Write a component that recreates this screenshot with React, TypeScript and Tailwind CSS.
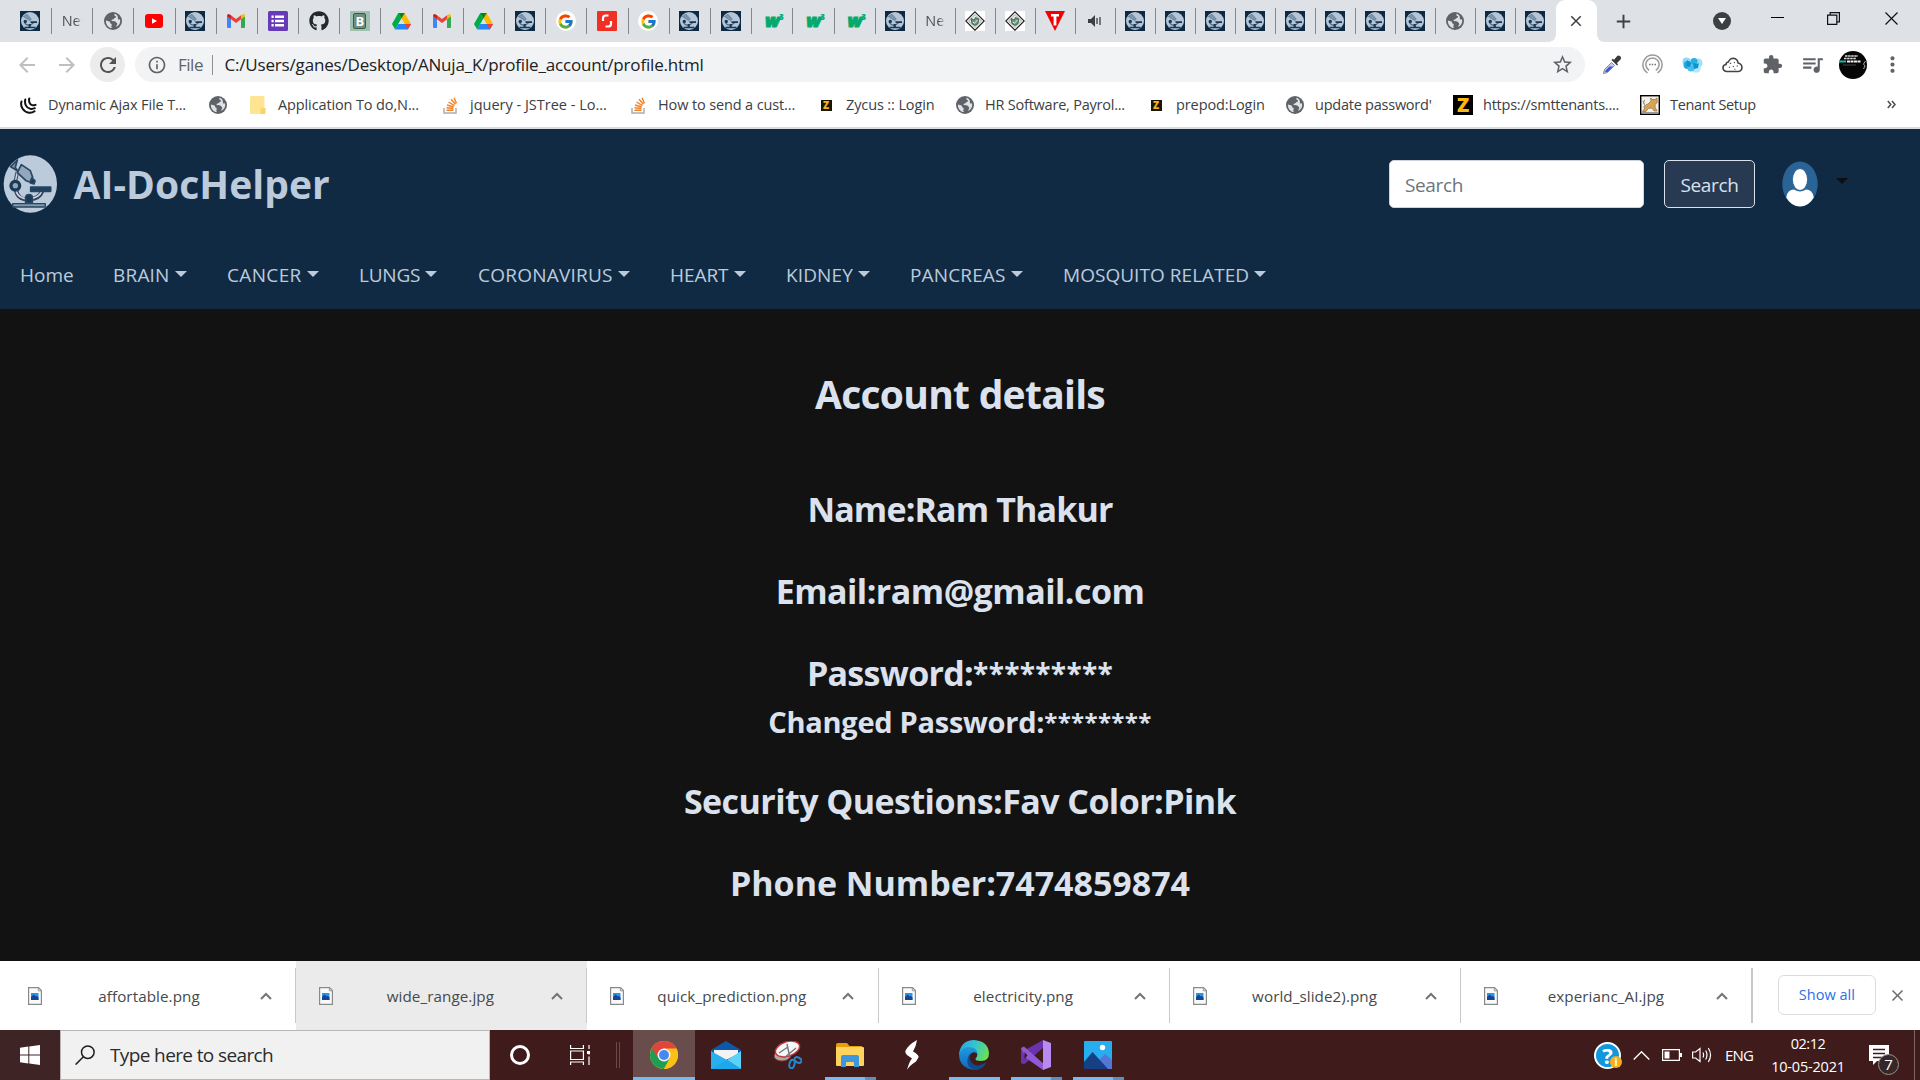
import type { ReactNode } from "react";
import { MdArrowBack, MdArrowForward, MdRefresh, MdInfoOutline, MdStarBorder, MdExtension, MdQueueMusic, MdMoreVert, MdClose, MdAdd } from "react-icons/md";
import { FcGoogle } from "react-icons/fc";
import { FaGithub } from "react-icons/fa";

/* ---------- favicons ---------- */

function Microscope() {
  return (
    <>
      <ellipse cx="91" cy="102" rx="80" ry="86" fill="#bccbdc" />
      <g stroke="#29455f" strokeWidth="5" strokeLinejoin="round" fill="none">
        <path d="M32 50 L52 30 L46 52 L52 62 Z" fill="#7f97ad" />
        <path d="M52 66 L46 94" stroke="#3b5873" strokeWidth="11" />
        <path d="M52 66 L46 94" stroke="#d9cfdf" strokeWidth="4" />
        <path d="M64 44 L91 62 L98 82 L90 96 L78 92 L52 68 Z" fill="#92a7bc" />
        <path d="M95 84 L105 92 L102 102 L91 99 Z" fill="#1d3a55" />
        <path d="M48 120 C52 144 72 150 88 148 C110 146 122 136 126 124" strokeWidth="13" />
        <path d="M48 120 C52 142 72 148 88 146 C110 144 120 136 125 124" stroke="#d9cfdf" strokeWidth="5" />
        <circle cx="46" cy="107" r="13" fill="#8fa6bb" stroke="#1d3a55" strokeWidth="10" />
        <path d="M92 111 H152 V124 H92 Z" fill="#1d4260" />
        <path d="M77 158 V143 Q77 134 87 134 Q97 134 97 143 V158 Z" fill="#17395a" />
        <path d="M38 161 H136 V171 H38 Z" fill="#8098ae" strokeWidth="4" />
      </g>
    </>
  );
}

function LogoFav() {
  return (
    <svg className="size-5 shrink-0" viewBox="0 0 20 20">
      <rect width="20" height="20" fill="#0e2942" />
      <circle cx="10" cy="10" r="9" fill="#b4c6d8" />
      <path d="M3.500 5.500 7 3.200 11.300 8.200 9.500 9.600z" fill="#7d97b0" stroke="#4c6a86" strokeWidth=".6" />
      <path d="M4.600 9.500c-.5 4.500 4.500 6.500 8.900 2.200" fill="none" stroke="#4c6a86" strokeWidth="1.200" />
      <circle cx="5.300" cy="10.500" r="1.700" fill="#1d3a55" />
      <path d="M10.500 10.300h6.500v1.600h-6.500zM8.600 13h2.200v3h-2.200zM4.500 15.700h11v1.500h-11z" fill="#183853" />
    </svg>
  );
}

function Globe() {
  return (
    <svg className="size-[18px] shrink-0" viewBox="0 0 18 18">
      <circle cx="9" cy="9" r="9" fill="#5f6368" />
      <path d="M10.800 1.800c-1 1-.3 1.900.6 2.300 1 .5.800 1.500-.4 1.800-1.300.3-1 1.400-2.300 1.500-1.200.1-1.700.9-.7 1.500 1.300.4 3.300-.3 3.900 1.200.3 1 1.300.7 1.300 1.800 0 1-.9 1.700-1.200 2.900 2.600-.9 4.200-3.200 4.200-5.800 0-.7-.1-1.200-.3-1.800-1.500.8-2.200-.1-2-1.200.1-1.400-.8-3.700-3.100-4.200z" fill="#dee1e6" />
      <path d="M1.900 8.500c1.300.7 2.500.300 3.600 1.100 1.100.800.200 1.800 1.400 2.100 1.100.3 1 1.400.5 2.300-.3.700.1 1.300.6 2.100-3.500-.2-6.300-3.500-6.100-7.600z" fill="#dee1e6" />
    </svg>
  );
}

function YouTube() {
  return (
    <svg className="h-[14px] w-[18px] shrink-0" viewBox="0 0 18 14">
      <rect width="18" height="14" rx="3" fill="#f00" />
      <path d="M7 4.200v5.600L12 7z" fill="#fff" />
    </svg>
  );
}

function Gmail() {
  return (
    <svg className="h-[14px] w-[18px] shrink-0" viewBox="0 0 18 14">
      <path d="M0 2v11q0 1 1 1h3V5z" fill="#4285f4" />
      <path d="M18 2v11q0 1-1 1h-3V5z" fill="#34a853" />
      <path d="M4 5.200V1.200l5 3.700 5-3.700v4L9 9z" fill="#ea4335" />
      <path d="M14 1.200 15.200.4Q18-.8 18 2.200L14 5.300z" fill="#fbbc04" />
      <path d="M4 1.200 2.800.4Q0-.8 0 2.200L4 5.300z" fill="#c5221f" />
    </svg>
  );
}

function Forms() {
  return (
    <svg className="size-5 shrink-0" viewBox="0 0 20 20">
      <rect width="20" height="20" rx="1.500" fill="#673ab7" />
      <path d="M7 4.500h9v2.400H7zM7 8.800h9v2.400H7zM7 13.100h9v2.400H7zM3.500 4.500h2.200v2.400H3.500zM3.500 8.800h2.200v2.400H3.500zM3.500 13.100h2.200v2.400H3.500z" fill="#fff" />
    </svg>
  );
}

function Drive() {
  return (
    <svg className="h-[17px] w-[19px] shrink-0" viewBox="0 0 19 17">
      <path d="M6.300 0h6.400L6.400 11 3.200 16.500 0 11z" fill="#00ac47" />
      <path d="M6.300 0h6.400L19 11h-6.300z" fill="#ffba00" />
      <path d="M3.200 16.500 6.400 11H19l-3.200 5.500z" fill="#2684fc" />
      <path d="M12.700 11H19l-3.200 5.500z" fill="#ea4335" />
      <path d="M6.300 0h6.400L9.500 5.500z" fill="#00832d" />
      <path d="M9.500 5.600 12.600 11H6.400z" fill="#dee1e6" />
    </svg>
  );
}

function GreenB() {
  return (
    <div className="flex size-5 shrink-0 items-center justify-center bg-[#9fc0ae]">
      <div className="flex h-[16px] w-[13px] items-center justify-center rounded-[2px] border border-[#3c5a4b] bg-[#6f8f7f] text-[13px] leading-none font-bold text-white">B</div>
    </div>
  );
}

function Google() {
  return (
    <div className="flex size-5 shrink-0 items-center justify-center rounded-full bg-white">
      <FcGoogle className="size-[17px]" />
    </div>
  );
}

function Shutter() {
  return (
    <svg className="size-5 shrink-0" viewBox="0 0 20 20">
      <rect width="20" height="20" rx="1" fill="#ee3124" />
      <path d="M11.500 4.500H8.800Q6 4.500 6 7.300V10M8.500 15.500h2.700Q14 15.500 14 12.700V10" fill="none" stroke="#fff" strokeWidth="2.200" />
    </svg>
  );
}

function W3() {
  return (
    <div className="ml-[5px] flex h-5 shrink-0 font-extrabold text-[#04aa6d]">
      <span className="text-[18px] leading-[18px] tracking-[-1px] italic [-webkit-text-stroke:1px_#04aa6d]">w</span>
      <span className="text-[8px] leading-[12px]">3</span>
    </div>
  );
}

function Diamond() {
  return (
    <svg className="size-5 shrink-0" viewBox="0 0 20 20">
      <rect width="20" height="20" fill="#fff" />
      <path d="M10 .8 19.200 10 10 19.200.8 10z" fill="#fff" stroke="#222" strokeWidth="1.200" />
      <path d="M10 3.500 16.500 10 10 16.500 3.500 10z" fill="#e3e9e4" stroke="#777" strokeWidth=".6" />
      <path d="M6 7.500 9 9l1.500-2.500L13.800 8l-.8 4.500-3 2-3-2z" fill="#6c9a7e" stroke="#263d2f" strokeWidth=".7" />
      <path d="m8 11 1.500 1.300L12.500 9" stroke="#e3e9e4" strokeWidth="1" fill="none" />
    </svg>
  );
}

function RedT() {
  return (
    <svg className="size-5 shrink-0" viewBox="0 0 20 20">
      <path d="M0 0h20L10 20z" fill="#f40000" />
      <path d="M6 3h8v2.400h-2.600v9H8.600v-9H6z" fill="#fff" />
    </svg>
  );
}

function Speaker() {
  return (
    <svg className="h-3 w-3.5 shrink-0" viewBox="0 0 14 12">
      <path d="M0 4h3l4-4v12L3 8H0z" fill="#3c4043" />
      <path d="M9 3v6M12 2v8" stroke="#3c4043" strokeWidth="1.300" />
    </svg>
  );
}

const NewTab = () => (
  <span className="block w-[21px] overflow-hidden bg-gradient-to-r from-[#4a4d51] from-70% to-[#dee1e6] bg-clip-text text-[14.500px] whitespace-nowrap text-transparent">New</span>
);

const favs: Record<string, () => ReactNode> = {
  L: LogoFav, N: NewTab, O: Globe, Y: YouTube, M: Gmail, F: Forms,
  H: () => <FaGithub className="size-5 shrink-0 text-[#24292e]" />,
  B: GreenB, D: Drive, G: Google, S: Shutter, W: W3, X: Diamond, T: RedT, P: Speaker,
};

const wideTabs = "LNOYLMFHBDMDLGSGLLWWW".split("");
const narrowTabs = "LNXXTPLLLLLLLLOLL".split("");

function Tabs({ ids, cell }: { ids: string[]; cell: string }) {
  return (
    <>
      {ids.map((id, i) => {
        const Icon = favs[id];
        return (
          <div key={i} className={cell}>
            <div className="flex w-5 items-center justify-center"><Icon /></div>
          </div>
        );
      })}
    </>
  );
}

function TabStrip() {
  return (
    <div className="flex h-[42px] bg-[#dee1e6] pl-[10.800px]">
      <div className="flex h-[25px] pt-[9px] box-content">
        <Tabs ids={wideTabs} cell="flex w-[41.200px] shrink-0 items-center justify-end border-r-[1.500px] border-[#85888d] pr-[10.500px] -mt-px" />
        <Tabs ids={narrowTabs} cell="flex w-[40px] shrink-0 items-center justify-end border-r-[1.500px] border-[#85888d] pr-[9.500px] -mt-px last:border-transparent" />
      </div>
      <div className="flex h-[42px] items-end">
        <div className="size-[7px] bg-[radial-gradient(circle_at_0_0,#dee1e6_6.500px,#fff_7px)] -ml-[7px]" />
        <div className="flex h-[42px] w-[41px] items-center justify-center rounded-t-[9px] bg-white">
          <MdClose className="size-[18px] text-[#3c4043]" />
        </div>
        <div className="size-[7px] bg-[radial-gradient(circle_at_100%_0,#dee1e6_6.500px,#fff_7px)]" />
      </div>
      <div className="flex w-[40px] items-center justify-center"><MdAdd className="size-[23px] text-[#3c4043]" /></div>
      <div className="ml-auto flex w-[207px] items-center">
        <div className="flex size-[18px] items-center justify-center rounded-full bg-[#3c4043]">
          <svg className="size-[8px]" viewBox="0 0 8 8"><path d="M0 1h8L4 7z" fill="#fff" /></svg>
        </div>
        <div className="ml-[40px] h-px w-[13px] bg-black -mt-[7px]" />
        <svg className="ml-[43px] h-[13px] w-[13px] -mt-[5px]" viewBox="0 0 13 13" fill="none" stroke="#111" strokeWidth="1.200">
          <path d="M.6 3.200h9.200v9.200H.6zM3.200 3V.6h9.200v9.200H10" />
        </svg>
        <svg className="ml-[45px] h-[13px] w-[13px] -mt-[5px]" viewBox="0 0 13 13" stroke="#111" strokeWidth="1.200">
          <path d="M.5.5l12 12M12.500.5l-12 12" />
        </svg>
      </div>
    </div>
  );
}

/* ---------- toolbar ---------- */

function Toolbar() {
  return (
    <div className="flex h-[45px] items-center bg-white pl-[15px]">
      <MdArrowBack className="size-[24px] text-[#bdbfc2]" />
      <MdArrowForward className="ml-[16px] size-[24px] text-[#bdbfc2]" />
      <div className="ml-[11px] flex size-[35px] items-center justify-center rounded-full bg-[#ececed]">
        <MdRefresh className="size-[24px] text-[#505357]" />
      </div>
      <div className="ml-[10px] flex h-[35px] w-[1450px] items-center rounded-full bg-[#f1f3f4] pl-[12px] pr-[11px] text-[17px] whitespace-nowrap">
        <MdInfoOutline className="size-[20px] text-[#5f6368]" />
        <span className="ml-[11px] tracking-[-0.480px] text-[#5f6368]">File</span>
        <div className="ml-[9px] h-[20px] w-[1.500px] bg-[#8d9195]" />
        <span className="ml-[11px] tracking-[-0.180px] text-[#202124]">C:/Users/ganes/Desktop/ANuja_K/profile_account/profile.html</span>
        <MdStarBorder className="ml-auto size-[23px] text-[#5f6368]" />
      </div>
      <div className="ml-[7px] flex items-center">
        <div className="flex w-10 justify-center">
          <svg className="size-5" viewBox="0 0 20 20">
            <path d="m1.500 18.500 1-4 7-7 3 3-7 7z" fill="#c7cbe8" stroke="#888" strokeWidth="1" />
            <path d="m3 17 1-2 3.500-3.500h3.500L5.500 17z" fill="#3b55d8" />
            <path d="m9.500 5 5.500 5.500 1-1-1-1.500 3.500-3.500q1.200-1.800-.3-3.200-1.600-1.400-3.200-.1L12 4.800l-1.300-1z" fill="#3a3a3a" />
          </svg>
        </div>
        <div className="flex w-10 justify-center">
          <svg className="size-[21px]" viewBox="0 0 21 21" fill="none" stroke="#999" strokeWidth="1.500">
            <path d="M5.500 18.900a9.600 9.600 0 1 1 10 0M7.200 16.300a6.600 6.600 0 1 1 6.600 0" />
            <path d="M7 10.500h1.500M9.700 10.500h1.500M12.500 10.500H14" stroke="#777" />
          </svg>
        </div>
        <div className="flex w-10 justify-center">
          <svg className="h-4 w-[21px]" viewBox="0 0 21 16">
            <circle cx="16" cy="6" r="4.600" fill="#9fdff7" /><circle cx="14" cy="11" r="4.800" fill="#b5e8fa" /><circle cx="4.500" cy="4.500" r="4" fill="#8fd8f5" />
            <circle cx="5.500" cy="8" r="4" fill="#27a9e0" /><circle cx="12" cy="4.500" r="3.600" fill="#27b0e6" /><circle cx="9" cy="11" r="3.500" fill="#49bdec" />
            <path d="M11 6l4 1 2-1-1 5-4 1zM5 3l4 3-1 4-4-1z" fill="#0f93cf" />
          </svg>
        </div>
        <div className="flex w-10 justify-center">
          <svg className="h-4 w-[21px]" viewBox="0 0 21 16" fill="none" stroke="#444" strokeWidth="1.600">
            <path d="M4.500 14.500Q1 14 1 10.800 1 8 4 7.500q0-2 2.300-2.500Q8 1.200 11.500 1.200q4 .5 4.600 4.800 3.800 1 3.900 4.500-.3 3.600-3.600 4z" />
            <path d="m8 6 1 .8M12 5l.8 1M7 10l1 .5M11 9l.6 1M15 8.500l.5 1M12.500 12l.8.500" strokeWidth="1.200" />
          </svg>
        </div>
        <div className="flex w-10 justify-center"><MdExtension className="size-[21px] text-[#5f6368]" /></div>
        <div className="flex w-10 justify-center"><MdQueueMusic className="size-[25px] text-[#5f6368]" /></div>
        <div className="flex w-[42px] justify-center">
          <svg className="size-[28px]" viewBox="0 0 28 28">
            <circle cx="14" cy="14" r="14" fill="#060606" />
            <path d="M6 5h13M5 7.500h12" stroke="#ddd" strokeWidth="1.500" strokeDasharray="2.500 .6" />
            <path d="M0 10.500h7" stroke="#14b8b0" strokeWidth="2" />
            <path d="M8 10.500h14" stroke="#eee" strokeWidth="2" strokeDasharray="3 .5" />
            <path d="M4 14h13" stroke="#555" strokeWidth=".8" />
            <path d="m26.500 10-2 3 1.500 2-1.500 3" stroke="#aaa" fill="none" />
          </svg>
        </div>
        <MdMoreVert className="ml-[6px] size-[25px] text-[#5f6368]" />
      </div>
    </div>
  );
}

/* ---------- bookmarks ---------- */

const Jq = () => (
  <svg className="size-[17px]" viewBox="0 0 17 17" fill="none" stroke="#111" strokeWidth="2" strokeLinecap="round">
    <path d="M1.500 4.500C0 9.500 3.500 15.300 9 15.700q3.500.2 5.500-1.500M5.300 2.500c-1 4 .8 8.500 5 9.300q2.500.4 4.500-.6M9.300 1.500C8.500 4.200 9.700 7.500 12 8.100q1.800.5 3.500-.3" />
  </svg>
);
const Folder = () => (
  <svg className="h-[18px] w-4" viewBox="0 0 16 18">
    <path d="M0 1.500Q0 0 1.500 0H13q1.500 0 1.500 1.500V12h1v6H1.500Q0 18 0 16.500z" fill="#ffe491" />
    <path d="M10.500 18v-4q0-2 2.500-2h2.300v4.500q0 1.500-1.500 1.500z" fill="#f9d568" />
  </svg>
);
const Stack = () => (
  <svg className="h-[17px] w-[15px]" viewBox="0 0 15 17" fill="none">
    <path d="M1 11V16h12v-5" stroke="#a9adb3" strokeWidth="1.500" />
    <path d="M3.500 13.300h7M3.500 10.800l7 .7M4 8l6.700 2M5.500 5l6 3.600M8 2.300l4.500 5M11 .8l2.500 5.500" stroke="#f48024" strokeWidth="1.400" />
  </svg>
);
const ZSmall = () => (
  <div className="flex size-[11px] items-center justify-center bg-[#1a1607] text-[10px] leading-none font-extrabold text-[#f2b417]">Z</div>
);
const ZBig = () => (
  <div className="flex size-5 items-center justify-center bg-black text-[20px] leading-none font-extrabold text-[#fdb913]">Z</div>
);
const Cat = () => (
  <svg className="size-5" viewBox="0 0 20 20">
    <rect x=".7" y=".7" width="18.600" height="18.600" fill="#f3f1ec" stroke="#000" strokeWidth="1.400" />
    <path d="M4 9q-2-3 1-4M8 9l3-3-.5-3 2 1.500h2.500L17 3l.3 4.500-2.300 2 .2 3 2 3.500h-3l-2.500-3-3.500.5L6 16.500H2.500l2-3Q4 10 8 9z" fill="#d9a350" stroke="#8b744f" strokeWidth=".7" />
    <path d="M2 17.500h16M3 12h2M3 6l2 5" stroke="#999" />
  </svg>
);

const bookmarks: { icon: () => ReactNode; text: string; cls: string }[] = [
  { icon: Jq, text: "Dynamic Ajax File T...", cls: "w-[190px] tracking-[-0.130px]" },
  { icon: Globe, text: "", cls: "w-[40px]" },
  { icon: Folder, text: "Application To do,N...", cls: "w-[192px] tracking-[-0.120px]" },
  { icon: Stack, text: "jquery - JSTree - Lo...", cls: "w-[188px]" },
  { icon: Stack, text: "How to send a cust...", cls: "w-[188px] tracking-[-0.130px]" },
  { icon: ZSmall, text: "Zycus :: Login", cls: "w-[139px] tracking-[-0.120px]" },
  { icon: Globe, text: "HR Software, Payrol...", cls: "w-[191px] tracking-[-0.220px]" },
  { icon: ZSmall, text: "prepod:Login", cls: "w-[139px] tracking-[-0.100px]" },
  { icon: Globe, text: "update password'", cls: "w-[168px] tracking-[-0.240px]" },
  { icon: ZBig, text: "https://smttenants....", cls: "w-[187px] tracking-[-0.240px]" },
  { icon: Cat, text: "Tenant Setup", cls: "w-[160px] tracking-[-0.350px]" },
];

function Bookmarks() {
  return (
    <div className="flex h-[42px] items-center border-b-2 border-[#dadce0] bg-white pb-[4px] pl-[18px] text-[14.500px] whitespace-nowrap text-[#3c4043]">
      {bookmarks.map(({ icon: Icon, text, cls }, i) => (
        <div key={i} className={"flex shrink-0 items-center " + cls}>
          <div className="mr-[10px] flex w-5 shrink-0 justify-center"><Icon /></div>
          {text}
        </div>
      ))}
      <svg className="ml-auto mr-[24px] h-[9px] w-[9px] -mt-px" viewBox="0 0 9 9" fill="none" stroke="#4a4d51" strokeWidth="1.500"><path d="M.8 1l3 3.500-3 3.500M5 1l3 3.500L5 8" /></svg>
    </div>
  );
}

/* ---------- page ---------- */

const links: [string, string, boolean][] = [
  ["Home", "w-[93px] tracking-[0px]", false],
  ["BRAIN", "w-[114px] tracking-[0.200px]", true],
  ["CANCER", "w-[132px] tracking-[0.350px]", true],
  ["LUNGS", "w-[119px] tracking-[-0.200px]", true],
  ["CORONAVIRUS", "w-[192px] tracking-[0.220px]", true],
  ["HEART", "w-[116px] tracking-[-0.050px]", true],
  ["KIDNEY", "w-[124px] tracking-[0.130px]", true],
  ["PANCREAS", "w-[153px] tracking-[0.140px]", true],
  ["MOSQUITO RELATED", "w-[210px] tracking-[0.040px]", true],
];

const Caret = ({ className }: { className: string }) => (
  <svg className={className} viewBox="0 0 12 6"><path d="M0 0h12L6 6z" fill="currentColor" /></svg>
);

function SiteHeader() {
  return (
    <header className="h-[180px] bg-[#112a43] text-[#bccbdc]">
      <div className="flex h-[110px] items-center">
        <svg className="mt-[2px] size-[70px] shrink-0" viewBox="0 0 210 210"><Microscope /></svg>
        <span className="-mt-px ml-[3.500px] text-[39px] leading-none font-bold tracking-[0.060px]">AI-DocHelper</span>
        <div className="ml-auto flex w-[531px] items-center text-[19px] tracking-[-0.360px]">
          <div className="flex h-12 w-[255px] items-center rounded-[5px] border border-[#ced4da] bg-white pt-[2px] pl-[15px] text-[#6c757d]">Search</div>
          <div className="ml-[20px] flex h-12 w-[91px] items-center justify-center rounded-[5px] border border-[#d9e1ec] bg-[#273a52] pt-[2px] text-[#d9e1ec]">Search</div>
          <svg className="ml-[27px] h-[46px] w-[36px]" viewBox="0 0 36 46">
            <ellipse cx="18" cy="23" rx="17.700" ry="22.500" fill="#2a6496" />
            <path d="M4.200 36.500Q5.500 28.500 12 28.500q6 3.800 12 0 6.500 0 7.800 8Q26.500 45.500 18 45.500T4.200 36.500z" fill="#fff" />
            <ellipse cx="18" cy="18.500" rx="7.600" ry="11" fill="#fff" stroke="#2a6496" strokeWidth="1" />
          </svg>
          <Caret className="mb-[6px] ml-[18px] h-[6px] w-3 text-[#0b0f14]" />
        </div>
      </div>
      <nav className="flex h-[70px] items-center pl-5 text-[19px] whitespace-nowrap">
        {links.map(([label, cls, caret]) => (
          <div key={label} className={"flex h-[70px] shrink-0 items-center " + cls}>
            <span className="pt-[2px]">{label}</span>
            {caret && <Caret className="ml-[5px] h-[6px] w-3" />}
          </div>
        ))}
      </nav>
    </header>
  );
}

function Account() {
  return (
    <main className="flex h-[652px] flex-col items-center bg-[#121212] pt-[60px] text-[34px] leading-[42px] font-bold whitespace-nowrap text-[#dbe2ee]">
      <h1 className="text-[39px] leading-[50px] tracking-[-0.730px]">Account details</h1>
      <h2 className="mt-[69px] tracking-[-0.850px]">Name:Ram Thakur</h2>
      <h2 className="mt-[40px] tracking-[-0.530px]">Email:ram@gmail.com</h2>
      <h2 className="mt-[40px] h-[42px] tracking-[-0.700px]">Password:<span className="align-[2px] text-[28px] leading-none tracking-[0.300px]">*********</span></h2>
      <h3 className="mt-[10px] h-[35px] text-[29px] leading-[36px] tracking-[-0.280px]">Changed Password:<span className="align-[2px] text-[24px] leading-none tracking-[0.350px]">********</span></h3>
      <h2 className="mt-[41px] tracking-[-0.560px]">Security Questions:Fav Color:Pink</h2>
      <h2 className="mt-[40px] tracking-[-0.020px]">Phone Number:7474859874</h2>
    </main>
  );
}

/* ---------- downloads ---------- */

const files: [string, string][] = [
  ["affortable.png", "bg-white"], ["wide_range.jpg", "bg-[#ebebeb]"], ["quick_prediction.png", "bg-white"],
  ["electricity.png", "bg-white"], ["world_slide2).png", "bg-white"], ["experianc_AI.jpg", "bg-white"],
];

function Downloads() {
  return (
    <div className="flex h-[69px] bg-white pl-[4.500px]">
      {files.map(([name, bg], i) => (
        <div key={name} className={"flex w-[291.400px] shrink-0 items-center " + bg}>
          <svg className="ml-[23px] h-[18px] w-[14px]" viewBox="0 0 14 18">
            <path d="M.6.600h9.900L13.400 3.500v13.900H.6z" fill="#fafafa" stroke="#8a8a8a" strokeWidth="1.200" />
            <path d="M10.300.8v3h3" fill="none" stroke="#9a9a9a" />
            <rect x="3" y="6" width="7.500" height="7" fill="#2596e8" />
            <path d="M3 13v-3l2.700-2.500 2 2 1-.8L10.500 10.500V13z" fill="#17458f" />
          </svg>
          <span className="ml-[-3px] w-[221px] pt-px text-center text-[15.200px] tracking-[0.080px] text-[#45494d]">{name}</span>
          <svg className="h-[8px] w-[12px]" viewBox="0 0 12 8" fill="none" stroke="#70757a" strokeWidth="2"><path d="M1 7l5-5 5 5" /></svg>
          <div className={"ml-auto h-[55px] bg-[#c9c9cb] " + (i === 5 ? "w-[2px]" : "w-px")} />
        </div>
      ))}
      <div className="mt-[14px] ml-[25px] flex h-10 w-[98px] items-center justify-center rounded-[6px] border border-[#dadce0] text-[14.500px] text-[#2a6fe8]">Show all</div>
      <MdClose className="mt-[25px] ml-[12px] size-[19px] text-[#6b6f73]" />
    </div>
  );
}

/* ---------- taskbar ---------- */

const Chrome = () => (
  <svg className="size-7" viewBox="0 0 28 28">
    <circle cx="14" cy="14" r="14" fill="#fbc116" />
    <path d="M14 14 1.900 7A14 14 0 0 0 14 28l6-10.500z" fill="#1e9e54" />
    <path d="M14 7.500h12.400A14 14 0 0 0 1.900 7L8 17.500z" fill="#e0443a" />
    <path d="M14 28 19.800 17.200 14 14 26.400 7.500A14 14 0 0 1 14 28z" fill="#fbc116" />
    <circle cx="14" cy="14" r="6.500" fill="#f5f5f5" /><circle cx="14" cy="14" r="5" fill="#4688f1" />
  </svg>
);
const Mail = () => (
  <svg className="h-7 w-[30px]" viewBox="0 0 30 28">
    <path d="M0 9 15 0l15 9v3H0z" fill="#0c59a8" />
    <path d="M3 9h24v4L15 19 3 13z" fill="#f3f3f3" />
    <path d="M0 10l16 9 14 9H0z" fill="#27b0ee" />
    <path d="M30 10v18L16 19z" fill="#5bd3f8" /><path d="M0 28l16-9 14 9z" fill="#1ea6ee" />
  </svg>
);
const Snip = () => (
  <svg className="h-7 w-7" viewBox="0 0 28 28">
    <ellipse cx="8" cy="15" rx="8" ry="5" fill="#aaa" stroke="#963a3a" />
    <ellipse cx="13.500" cy="8" rx="12.500" ry="7.200" transform="rotate(-18 13.500 8)" fill="#f7f7f7" stroke="#c93636" strokeWidth="1.500" />
    <path d="M13 3l3 14M22 7 10 17M5 12l9-6" stroke="#777" strokeWidth="1.400" />
    <ellipse cx="18" cy="23" rx="2.500" ry="4.300" transform="rotate(15 18 23)" fill="none" stroke="#2487cf" strokeWidth="2" />
    <ellipse cx="24" cy="19" rx="3.700" ry="2.500" transform="rotate(30 24 19)" fill="none" stroke="#2487cf" strokeWidth="2" />
  </svg>
);
const Explorer = () => (
  <svg className="h-6 w-7" viewBox="0 0 28 24">
    <path d="M0 2q0-2 2-2h9l2.500 3H26v4H0z" fill="#e3a008" />
    <rect y="4" width="28" height="19" rx="1" fill="#ffd35c" />
    <path d="M5 24V14q0-2 2-2h14q2 0 2 2v10h-5v-4q0-1-1-1h-6q-1 0-1 1v4z" fill="#3c97dc" />
  </svg>
);
const Bolt = () => (
  <svg className="h-[30px] w-[14px]" viewBox="0 0 14 30">
    <path d="M12 0Q3 5 .3 11 0 13.500 2 15L7 18.500Q4 22 2 30 4 26 11 21.500L13.700 17Q13 14 8 11.500 11 7 12 0z" fill="#fff" />
  </svg>
);
const Edge = () => (
  <svg className="size-[30px]" viewBox="0 0 30 30">
    <defs>
      <linearGradient id="edgeTop" x1="0" x2="1" y1=".3" y2=".6"><stop stopColor="#2aa5e4" /><stop offset=".5" stopColor="#35c7c9" /><stop offset="1" stopColor="#6ee04f" /></linearGradient>
      <linearGradient id="edgeLow" x1="0" x2="0" y1="0" y2="1"><stop stopColor="#1f9be2" /><stop offset="1" stopColor="#1166b8" /></linearGradient>
    </defs>
    <path d="M0 14Q2 0 15 0q14 1 15 13 0 8-8 8-6 0-5.500-2.500Q19 16 18 13 14 6 0 14z" fill="url(#edgeTop)" />
    <path d="M0 14Q3 7 10 7q8 0 8.500 7-2-2.500-5-1.500-4 2-3 7Q13 29 20 29 14 31 8 28 0 24 0 14z" fill="url(#edgeLow)" />
    <path d="M12.500 13q-3.500 4.500 0 9.500 5.500 6 15-.5Q24 30 16 30 7 27 8.500 19q1-4.500 4-6z" fill="#114a8b" />
  </svg>
);
const VS = () => (
  <svg className="size-[30px]" viewBox="0 0 30 30">
    <path d="M0 8v15l3 1.500L22 8V0L4 10z" fill="#6a32ad" />
    <path d="M0 8l3-1.500L24 25l-2 5L5 18z" fill="#9259d6" />
    <path d="M3.500 12v7l3-3.500z" fill="#3f1b1b" />
    <path d="M22 0l8 3v24l-8 3z" fill="#b98af2" /><path d="M22 9v13l-8-6.500z" fill="#3f1b1b" />
  </svg>
);
const Photos = () => (
  <svg className="size-7" viewBox="0 0 28 28">
    <rect width="28" height="28" rx="1" fill="#27aef0" />
    <path d="M13 21 21 13l7 6v9H13z" fill="#5476d4" /><path d="M0 21 8.500 11 24 28H0z" fill="#173f86" />
    <circle cx="18.500" cy="6.500" r="2.700" fill="#fff" />
  </svg>
);

function TaskApp({ icon, open, split, active }: { icon: ReactNode; open?: boolean; split?: boolean; active?: boolean }) {
  return (
    <div className={"flex h-[50px] w-[62px] flex-col items-center " + (active ? "bg-[#694c4c]" : "")}>
      <div className="flex h-[47px] items-center pt-[3px]">{icon}</div>
      {open && (
        <div className={"flex h-[3px] " + (active ? "w-full" : "w-[51px]")}>
          <div className="flex-1 bg-[#78b9ee]" />
          {split && <div className="w-[11px] bg-[#5f8fb8]" />}
        </div>
      )}
    </div>
  );
}

function Taskbar() {
  return (
    <div className="flex h-[50px] bg-[#3f1b1b] text-[15px] text-white">
      <div className="flex w-[60px] items-center justify-center bg-[#3f2425]">
        <svg className="size-5" viewBox="0 0 20 20" fill="#fff"><path d="M0 2.700 8.300 1.500v8H0zM9.300 1.400 20 0v9.500H9.300zM0 10.500h8.300v8L0 17.300zM9.300 10.500H20V20L9.300 18.600z" /></svg>
      </div>
      <div className="flex w-[430px] items-center border border-[#bcb5b5] bg-[#f1f1f1] pl-[14px] text-[19px] tracking-[-0.620px] text-[#2b2b2b]">
        <svg className="size-5" viewBox="0 0 20 20" fill="none" stroke="#1f1f1f" strokeWidth="1.500"><circle cx="12.800" cy="7.200" r="6.300" /><path d="M8.400 11.800.6 19.600" /></svg>
        <span className="ml-[15px]">Type here to search</span>
      </div>
      <div className="flex w-[60px] items-center justify-center"><div className="size-[20px] rounded-full border-[3px] border-white" /></div>
      <div className="flex w-[60px] items-center justify-center">
        <svg className="size-5" viewBox="0 0 20 20" fill="none" stroke="#fff" strokeWidth="1.200">
          <path d="M.6 0v3.500h12.800V0M.6 6h12.800v8.500H.6zM.6 20v-3h12.800v3M19 0v20" /><path d="M18 5h2M18 10.500h2" stroke="#3f1b1b" strokeWidth="1.800" /><rect x="17" y="6" width="3" height="3" fill="#fff" stroke="none" />
        </svg>
      </div>
      <div className="mt-3 ml-[6px] h-[26px] w-[4px] border-x border-[#6b4a4a]" />
      <div className="ml-[13px] flex">
        <TaskApp icon={<Chrome />} open active />
        <TaskApp icon={<Mail />} />
        <TaskApp icon={<Snip />} />
        <TaskApp icon={<Explorer />} open split />
        <TaskApp icon={<Bolt />} />
        <TaskApp icon={<Edge />} open />
        <TaskApp icon={<VS />} open split />
        <TaskApp icon={<Photos />} open split />
      </div>
      <div className="ml-auto flex w-[326px] items-center whitespace-nowrap">
        <div className="relative flex h-[27px] w-[27px] items-center justify-center rounded-full border-2 border-white bg-[#1097dc] text-[22px] leading-none font-bold">
          ?
          <div className="absolute -right-[3px] -bottom-px flex size-[12px] items-center justify-center rounded-full bg-[#f7b01c] text-[10px] leading-none">i</div>
        </div>
        <svg className="ml-[12px] h-[9px] w-[17px]" viewBox="0 0 17 9" fill="none" stroke="#fff" strokeWidth="1.400"><path d="M.7 8.500 8.500.8l7.800 7.700" /></svg>
        <svg className="ml-[12px] h-[12px] w-[20px]" viewBox="0 0 20 12"><path d="M.6.600h16.800v10.800H.6z" fill="none" stroke="#fff" strokeWidth="1.200" /><path d="M18 4h2v4h-2zM2.500 2.500h5v7h-5z" fill="#fff" /></svg>
        <svg className="ml-[10px] h-[18px] w-[20px]" viewBox="0 0 20 18" fill="none" stroke="#fff" strokeWidth="1.200"><path d="M.6 6h3L8 2.500v13L3.600 12h-3zM11 6.500q1.200 2.500 0 5M13.700 4.500q2.500 4.500 0 9M16.300 2q4.500 7 0 14" /></svg>
        <span className="ml-[13px] w-[28px] tracking-[-0.850px]">ENG</span>
        <div className="ml-[18px] flex w-[74px] flex-col items-center text-[14.500px] leading-[23px]">
          <span className="tracking-[-0.500px]">02:12</span>
          <span className="tracking-[-0.200px]">10-05-2021</span>
        </div>
        <div className="relative ml-[24px] h-[20px] w-[20px]">
          <svg className="h-[20px] w-[20px]" viewBox="0 0 20 20"><path d="M0 0h20v16H8l-4 4v-4H0z" fill="#fff" /><path d="M4 4.500h12M4 8.500h12M4 12.500h9" stroke="#3f1b1b" strokeWidth="1.300" /></svg>
          <div className="absolute top-[9px] left-[9px] flex size-[21px] items-center justify-center rounded-full border border-[#9c9090] bg-[#362829] text-[15px] leading-none">7</div>
        </div>
        <div className="ml-auto mr-[5px] h-[50px] w-px bg-[#806565]" />
      </div>
    </div>
  );
}

export default function App() {
  return (
    <div className="flex h-[1080px] w-[1920px] flex-col overflow-hidden bg-white font-['Open_Sans','Noto_Sans',sans-serif]">
      <TabStrip />
      <Toolbar />
      <Bookmarks />
      <SiteHeader />
      <Account />
      <Downloads />
      <Taskbar />
    </div>
  );
}
